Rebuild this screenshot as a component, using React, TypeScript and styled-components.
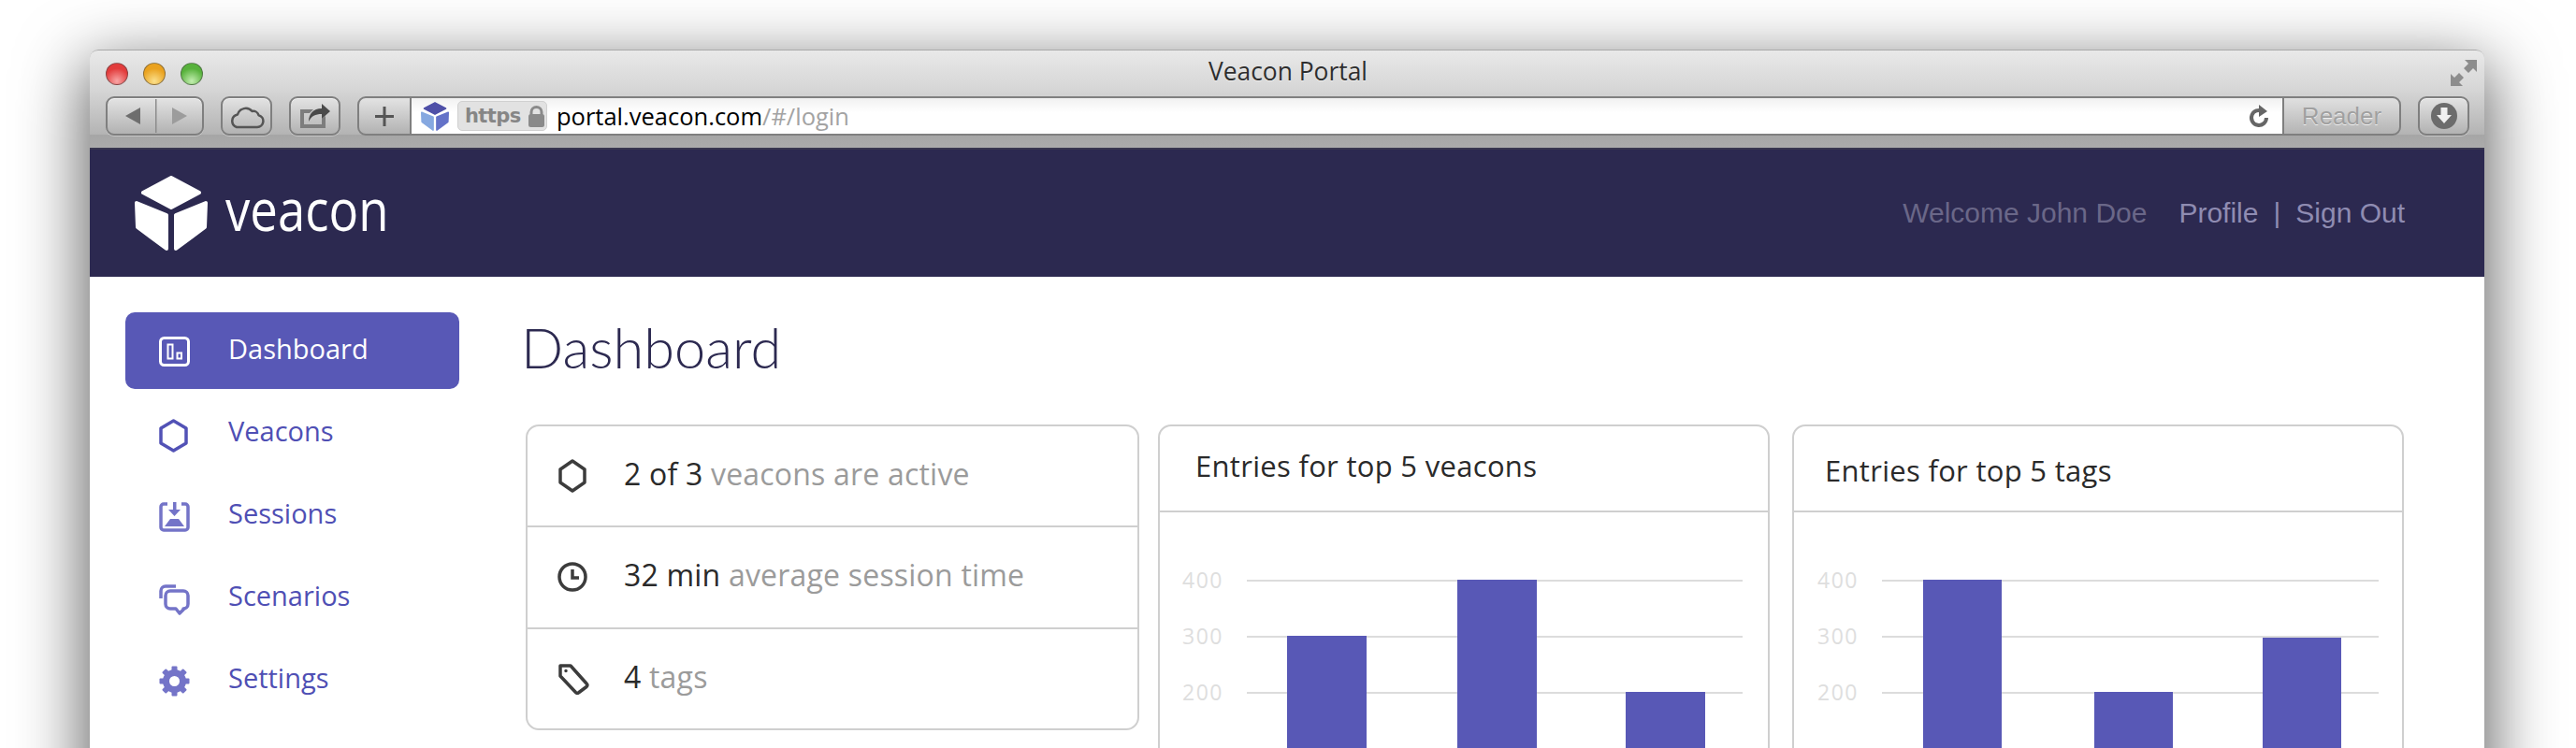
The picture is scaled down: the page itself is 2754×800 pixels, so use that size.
import React from 'react';
import styled, { createGlobalStyle } from 'styled-components';

const GlobalStyle = createGlobalStyle`
  html, body {
    margin: 0;
    padding: 0;
    background: #fff;
    overflow: hidden;
  }
`;

const UI_FONT = `"Open Sans", "Liberation Sans", sans-serif`;

const navItems = [
  { label: 'Dashboard', icon: 'dashboard', shift: 1, active: true },
  { label: 'Veacons', icon: 'hexagon', shift: 3 },
  { label: 'Sessions', icon: 'sessions', shift: 2 },
  { label: 'Scenarios', icon: 'scenarios', shift: 3 },
  { label: 'Settings', icon: 'settings', shift: 1 },
];

const stats = [
  { icon: 'hex', strong: '2 of 3', rest: 'veacons are active' },
  { icon: 'clock', strong: '32 min', rest: 'average session time' },
  { icon: 'tag', strong: '4', rest: 'tags' },
];

const veaconChart = {
  labelX: 24,
  lineFrom: 93,
  lineTo: 623,
  barWidth: 85,
  bars: [{ x: 136, top: 132 }, { x: 318, top: 72 }, { x: 498, top: 192 }],
};

const tagChart = {
  labelX: 25,
  lineFrom: 94,
  lineTo: 625,
  barWidth: 84,
  bars: [{ x: 138, top: 72 }, { x: 321, top: 192 }, { x: 501, top: 134 }],
};

const NavIcon: React.FC<{ name: string }> = ({ name }) => {
  if (name === 'dashboard') {
    return (
      <svg width="33" height="33" viewBox="0 0 33 33" fill="none" stroke="#fff">
        <rect x="1.500" y="1.500" width="30" height="29" rx="4" strokeWidth="3" />
        <rect x="9.500" y="8.500" width="5" height="15" strokeWidth="2" />
        <rect x="19.500" y="17.500" width="4.500" height="6" strokeWidth="2" />
      </svg>
    );
  }
  if (name === 'hexagon') {
    return (
      <svg width="33" height="36" viewBox="0 0 33 36" fill="none" stroke="#5252b6" strokeWidth="3.500" strokeLinejoin="round">
        <path d="M15.500 2 L29 10 V26 L15.500 34 L2 26 V10 Z" />
      </svg>
    );
  }
  if (name === 'sessions') {
    return (
      <svg width="33" height="33" viewBox="0 0 33 33" fill="none">
        <path d="M9 2 H5 a3 3 0 0 0 -3 3 V27 a3 3 0 0 0 3 3 H28 a3 3 0 0 0 3 -3 V5 a3 3 0 0 0 -3 -3 H24" stroke="#7474c8" strokeWidth="3.500" />
        <path d="M15 0 h3.500 v8 h4.500 L16.500 15 L10 8 h5 Z M12 18 H21 L27 26 H6 Z" fill="#7474c8" />
      </svg>
    );
  }
  if (name === 'scenarios') {
    return (
      <svg width="33" height="34" viewBox="0 0 33 34" fill="none" stroke="#7474c8" strokeWidth="3.500" strokeLinejoin="round">
        <path d="M18 2 H7 a5 5 0 0 0 -5 5 V15" />
        <path d="M12 7 H26 a5 5 0 0 1 5 5 V21 a5 5 0 0 1 -5 5 H27 L22 31 L18 26 H12 a5 5 0 0 1 -5 -5 V12 a5 5 0 0 1 5 -5 Z" />
      </svg>
    );
  }
  return (
    <svg width="33" height="33" viewBox="0 0 33 33">
      {[0, 45, 90, 135, 180, 225, 270, 315].map((deg) => (
        <rect key={deg} x="13.500" y="0.500" width="6" height="6" rx="1" fill="#7474c8" transform={`rotate(${deg} 16.500 16.500)`} />
      ))}
      <circle cx="16.500" cy="16.500" r="9" fill="none" stroke="#7474c8" strokeWidth="7" />
    </svg>
  );
};

const StatIcon: React.FC<{ name: string }> = ({ name }) => {
  if (name === 'hex') {
    return (
      <svg width="32" height="36" viewBox="0 0 32 36" fill="none" stroke="#3c3c3c" strokeWidth="3.500" strokeLinejoin="round">
        <path d="M16 2 L29 11 V25 L16 34 L3 25 V11 Z" />
      </svg>
    );
  }
  if (name === 'clock') {
    return (
      <svg width="32" height="34" viewBox="0 0 32 34" fill="none" stroke="#3c3c3c" strokeWidth="3.500">
        <circle cx="16" cy="17" r="14" />
        <path d="M16 9 V18 H23" />
      </svg>
    );
  }
  return (
    <svg width="34" height="34" viewBox="0 0 34 34" fill="none" stroke="#3c3c3c" strokeWidth="3.500" strokeLinejoin="round">
      <path d="M3 3 H14 L31 22 a2.500 2.500 0 0 1 0 3.500 L23 31.500 a2.500 2.500 0 0 1 -3.500 0 L3 14 Z" />
      <circle cx="9" cy="8.500" r="1" fill="#3c3c3c" strokeWidth="1.500" />
    </svg>
  );
};

const CubeFaces: React.FC<{ top: string; left: string; right: string }> = ({ top, left, right }) => (
  <>
    <path d="M39 2 L69 18 L39 34 L9 18 Z" fill={top} stroke={top} strokeWidth="4" strokeLinejoin="round" />
    <path d="M2 29 L34 42 V78 L3 55 Z" fill={left} stroke={left} strokeWidth="4" strokeLinejoin="round" />
    <path d="M76 29 L44 42 V78 L75 55 Z" fill={right} stroke={right} strokeWidth="4" strokeLinejoin="round" />
  </>
);

const BarChart: React.FC<{ chart: typeof veaconChart }> = ({ chart }) => (
  <ChartSvg width="650" height="260">
    {[
      { value: 400, y: 73 },
      { value: 300, y: 133 },
      { value: 200, y: 193 },
    ].map((tick) => (
      <g key={tick.value}>
        <text x={chart.labelX} y={tick.y + 8} fontSize="23" letterSpacing="1.500" fill="#dedede" fontFamily={UI_FONT}>
          {tick.value}
        </text>
        <rect x={chart.lineFrom} y={tick.y - 1} width={chart.lineTo - chart.lineFrom} height="2" fill="#dcdcdc" />
      </g>
    ))}
    {chart.bars.map((bar) => (
      <rect key={bar.x} x={bar.x} y={bar.top} width={chart.barWidth} height={260 - bar.top} fill="#5858b6" />
    ))}
  </ChartSvg>
);

export default function App() {
  return (
    <Page>
      <GlobalStyle />
      <BrowserWindow>
        <Chrome>
          <TitleRow>
            <Lights>
              <Light $color="#e23c3c" $glow="#f9a6a6" />
              <Light $color="#eaa21f" $glow="#fbe08c" />
              <Light $color="#58b23c" $glow="#c3eeb0" />
            </Lights>
            <WindowTitle>Veacon Portal</WindowTitle>
            <FullscreenIcon viewBox="0 0 30 30" width="30" height="30">
              <path d="M16 1 H29 V14 L25 10 L20 15 L15 10 L20 5 Z M1 16 L5 20 L10 15 L15 20 L10 25 L14 29 H1 Z" fill="#8d8d8d" />
            </FullscreenIcon>
          </TitleRow>
          <ToolRow>
            <ToolButton $width={105}>
              <svg width="70" height="36" viewBox="0 0 70 36">
                <path d="M3 18 L19 9 V27 Z" fill="#6e6e6e" />
                <rect x="35" y="0" width="1.500" height="36" fill="#8c8c8c" />
                <path d="M53 9 L69 18 L53 27 Z" fill="#9c9c9c" />
              </svg>
            </ToolButton>
            <ToolButton $width={55}>
              <svg width="38" height="27" viewBox="0 0 38 27" fill="none" stroke="#555" strokeWidth="2.500" strokeLinejoin="round">
                <path d="M9 25 H30 a6.500 6.500 0 0 0 1.500 -12.800 a6 6 0 0 0 -7 -4.200 a9 9 0 0 0 -15.500 3.500 a7 7 0 0 0 -1 13.500 Z" />
              </svg>
            </ToolButton>
            <ToolButton $width={55}>
              <svg width="34" height="28" viewBox="0 0 34 28">
                <path d="M1 7 H15 L11 11 H5 V23 H24 V17 L28 14 V27 H1 Z" fill="#7d7d7d" />
                <path d="M24 1 L33 9 L24 17 V12 C17 12 13 14 10 20 C10 12 15 6 24 6 Z" fill="#4a4a4a" />
              </svg>
            </ToolButton>
            <AddressBar>
              <PlusButton>
                <svg width="20" height="21" viewBox="0 0 20 21">
                  <path d="M8.500 0 h3 v9 H20 v3 H11.500 V21 h-3 V12 H0 v-3 H8.500 Z" fill="#555" />
                </svg>
              </PlusButton>
              <UrlField>
                <svg width="30" height="31" viewBox="0 0 78 80">
                  <CubeFaces top="#4f50a8" left="#86a8e0" right="#6472c8" />
                </svg>
                <SchemeBadge>
                  https
                  <svg width="17" height="23" viewBox="0 0 17 23">
                    <path d="M3 10 V7 a5.500 5.500 0 0 1 11 0 V10" fill="none" stroke="#8a8a8a" strokeWidth="3" />
                    <rect x="0" y="9" width="17" height="14" rx="2.500" fill="#8a8a8a" />
                  </svg>
                </SchemeBadge>
                <UrlText>
                  portal.veacon.com<UrlPath>/#/login</UrlPath>
                </UrlText>
                <ReloadIcon width="23" height="25" viewBox="0 0 23 25">
                  <path d="M16 7 A8 8 0 1 0 20 14" fill="none" stroke="#666" strokeWidth="4" />
                  <path d="M12 0 L21 7 L12 13 Z" fill="#666" />
                </ReloadIcon>
              </UrlField>
              <ReaderButton>Reader</ReaderButton>
            </AddressBar>
            <ToolButton $width={55}>
              <svg width="28" height="28" viewBox="0 0 28 28">
                <circle cx="14" cy="14" r="14" fill="#6c6c6c" />
                <path d="M10.500 5 h7 v8 H22 L14 22 L6 13 h4.500 Z" fill="#f0f0f0" />
              </svg>
            </ToolButton>
          </ToolRow>
        </Chrome>

        <TopBar>
          <Logo>
            <svg width="78" height="80" viewBox="0 0 78 80">
              <CubeFaces top="#fff" left="#fff" right="#fff" />
            </svg>
            <LogoText>veacon</LogoText>
          </Logo>
          <UserArea>
            <Welcome>Welcome John Doe</Welcome>
            <TopLink>Profile</TopLink>
            <TopLink>|</TopLink>
            <TopLink>Sign Out</TopLink>
          </UserArea>
        </TopBar>

        <Body>
          <Sidebar>
            {navItems.map((item) => (
              <NavRow key={item.label} $active={item.active}>
                <NavIconSlot $shift={item.shift}>
                  <NavIcon name={item.icon} />
                </NavIconSlot>
                <NavLabel>{item.label}</NavLabel>
              </NavRow>
            ))}
          </Sidebar>
          <Main>
            <PageTitle>Dashboard</PageTitle>
            <Cards>
              <StatsCard>
                {stats.map((stat) => (
                  <StatRow key={stat.icon}>
                    <StatIconSlot>
                      <StatIcon name={stat.icon} />
                    </StatIconSlot>
                    <StatText>
                      <StatStrong>{stat.strong}</StatStrong> {stat.rest}
                    </StatText>
                  </StatRow>
                ))}
              </StatsCard>
              <ChartCard>
                <ChartHeader $offset={-3} $indent={38}>Entries for top 5 veacons</ChartHeader>
                <BarChart chart={veaconChart} />
              </ChartCard>
              <ChartCard $alignEnd>
                <ChartHeader $offset={2} $indent={33}>Entries for top 5 tags</ChartHeader>
                <BarChart chart={tagChart} />
              </ChartCard>
            </Cards>
          </Main>
        </Body>
      </BrowserWindow>
    </Page>
  );
}

const Page = styled.div`
  height: 800px;
  overflow: hidden;
  padding: 53px 98px 0 96px;
  box-sizing: border-box;
  background: #fff;
`;

const BrowserWindow = styled.div`
  width: 2560px;
  height: 900px;
  background: #fff;
  border-radius: 9px 9px 0 0;
  box-shadow: 0 22px 70px 6px rgba(0, 0, 0, 0.62);
`;

const Chrome = styled.header`
  height: 107px;
  box-sizing: border-box;
  border-top: 1px solid #a9a9a9;
  border-bottom: 2px solid #38364f;
  border-radius: 9px 9px 0 0;
  background: linear-gradient(#e9e9e9 0%, #d6d6d6 40%, #b4b4b4 86%, #a6a6a6 87%, #ababab 100%);
`;

const TitleRow = styled.div`
  height: 49px;
  display: grid;
  grid-template-columns: 1fr auto 1fr;
  align-items: center;
  padding: 0 7px 0 17px;
`;

const Lights = styled.div`
  display: flex;
  gap: 16px;
`;

const Light = styled.span<{ $color: string; $glow: string }>`
  width: 24px;
  height: 24px;
  border-radius: 50%;
  box-sizing: border-box;
  border: 1px solid rgba(70, 70, 70, 0.55);
  background: radial-gradient(circle at 50% 85%, ${(p) => p.$glow} 0%, ${(p) => p.$color} 62%, ${(p) => p.$color} 100%);
`;

const WindowTitle = styled.div`
  margin-top: -6px;
  padding-right: 8px;
  font: 400 26.400px "Open Sans", "Liberation Sans", sans-serif;
  color: #2e2e2e;
  text-shadow: 0 1px 0 rgba(255, 255, 255, 0.6);
`;

const FullscreenIcon = styled.svg`
  justify-self: end;
  margin-top: -2px;
`;

const ToolRow = styled.div`
  display: flex;
  align-items: stretch;
  height: 42px;
  padding: 0 16px 0 17px;
  gap: 18px;
`;

const ToolButton = styled.div<{ $width: number }>`
  width: ${(p) => p.$width}px;
  flex: none;
  box-sizing: border-box;
  display: flex;
  align-items: center;
  justify-content: center;
  border: 2px solid #7f7f7f;
  border-radius: 9px;
  background: linear-gradient(#e3e3e3, #b2b2b2);
  box-shadow: inset 0 1px 0 rgba(255, 255, 255, 0.6), 0 1px 0 rgba(255, 255, 255, 0.35);
`;

const AddressBar = styled.div`
  flex: none;
  width: 2185px;
  display: flex;
`;

const PlusButton = styled.div`
  width: 58px;
  box-sizing: border-box;
  display: flex;
  align-items: center;
  justify-content: center;
  border: 2px solid #7f7f7f;
  border-radius: 9px 0 0 9px;
  background: linear-gradient(#e3e3e3, #b2b2b2);
`;

const UrlField = styled.div`
  flex: 1;
  display: flex;
  align-items: center;
  box-sizing: border-box;
  padding: 0 14px 0 10px;
  border-top: 2px solid #808080;
  border-bottom: 2px solid #808080;
  background: linear-gradient(#f1f1f1, #fff 40%);
`;

const SchemeBadge = styled.div`
  display: flex;
  align-items: center;
  gap: 8px;
  margin-left: 9px;
  height: 32px;
  width: 96px;
  padding-left: 7px;
  box-sizing: border-box;
  flex: none;
  border: 1px solid #d0d0d0;
  border-radius: 5px;
  background: #e2e2e2;
  font: 700 21px "DejaVu Sans", sans-serif;
  letter-spacing: -0.6px;
  color: #868686;
`;

const UrlText = styled.div`
  margin-left: 10px;
  flex: 1;
  font: 400 25.500px "Open Sans", "Liberation Sans", sans-serif;
  color: #000;
`;

const UrlPath = styled.span`
  color: #a3a3a3;
`;

const ReloadIcon = styled.svg`
  flex: none;
`;

const ReaderButton = styled.div`
  width: 127px;
  box-sizing: border-box;
  display: flex;
  align-items: center;
  justify-content: center;
  border: 2px solid #7f7f7f;
  border-radius: 0 9px 9px 0;
  background: linear-gradient(#e0e0e0, #b4b4b4);
  font: 400 26px "Liberation Sans", sans-serif;
  color: #a0a0a0;
  text-shadow: 0 1px 0 #eee;
`;

const TopBar = styled.div`
  height: 136px;
  box-sizing: border-box;
  display: flex;
  align-items: center;
  justify-content: space-between;
  padding: 0 85px 0 48px;
  background: #2c2950;
`;

const Logo = styled.div`
  display: flex;
  align-items: center;
  gap: 19px;
`;

const LogoText = styled.span`
  display: inline-block;
  font: 500 62px "Open Sans", sans-serif;
  color: #fff;
  transform: scaleX(0.85);
  transform-origin: left center;
  margin-top: -11px;
`;

const UserArea = styled.div`
  display: flex;
  align-items: center;
  gap: 16px;
  font: 400 30px "Liberation Sans", Arial, sans-serif;
`;

const Welcome = styled.span`
  color: #6a6788;
  margin-right: 18px;
`;

const TopLink = styled.span`
  color: #8f8cb2;
`;

const Body = styled.div`
  display: flex;
  align-items: flex-start;
`;

const Sidebar = styled.nav`
  flex: none;
  width: 357px;
  margin-left: 38px;
  padding-top: 38px;
  display: flex;
  flex-direction: column;
  gap: 6px;
`;

const NavRow = styled.a<{ $active?: boolean }>`
  height: 82px;
  display: flex;
  align-items: center;
  border-radius: 10px;
  padding-left: 36px;
  font: 500 29px "Open Sans", sans-serif;
  background: ${(p) => (p.$active ? '#5858b6' : 'transparent')};
  color: ${(p) => (p.$active ? '#fff' : '#4f4fb4')};
`;

const NavIconSlot = styled.span<{ $shift: number }>`
  width: 74px;
  flex: none;
  display: flex;
  align-items: center;
  transform: translateY(${(p) => p.$shift}px);
`;

const NavLabel = styled.span`
  padding-bottom: 6px;
`;

const Main = styled.main`
  flex: 1;
  padding-left: 70px;
`;

const PageTitle = styled.h1`
  margin: 32px 0 40px -4px;
  height: 86px;
  font: 300 59.500px/86px Lato, sans-serif;
  color: #2c2950;
`;

const Cards = styled.div`
  display: grid;
  grid-template-columns: 656px 654px 658px;
  gap: 20px;
  margin-left: 1px;
  align-items: start;
`;

const StatsCard = styled.section`
  height: 327px;
  box-sizing: border-box;
  border: 2px solid #cfcfcf;
  border-radius: 14px;
  display: flex;
  flex-direction: column;
`;

const StatRow = styled.div`
  flex: 1;
  display: flex;
  align-items: center;
  padding-left: 32px;
  font: 400 32px "Open Sans", sans-serif;
  letter-spacing: 0.2px;
  color: #9b9b9b;

  & + & {
    border-top: 2px solid #cfcfcf;
  }
`;

const StatIconSlot = styled.span`
  width: 71px;
  flex: none;
  display: flex;
`;

const StatText = styled.span`
  padding-bottom: 5px;
`;

const StatStrong = styled.span`
  color: #2a2a2a;
  font-weight: 500;
`;

const ChartCard = styled.section<{ $alignEnd?: boolean }>`
  width: 654px;
  height: 500px;
  box-sizing: border-box;
  border: 2px solid #cfcfcf;
  border-radius: 14px 14px 0 0;
  justify-self: ${(p) => (p.$alignEnd ? 'end' : 'start')};
`;

const ChartHeader = styled.h2<{ $offset: number; $indent: number }>`
  margin: 0;
  height: 92px;
  box-sizing: border-box;
  display: flex;
  align-items: center;
  padding: ${(p) => (p.$offset > 0 ? p.$offset * 2 : 0)}px 0 ${(p) => (p.$offset < 0 ? -p.$offset * 2 : 0)}px ${(p) => p.$indent}px;
  border-bottom: 2px solid #cfcfcf;
  font: 500 31px "Open Sans", sans-serif;
  letter-spacing: 0.3px;
  color: #2a2a2a;
`;

const ChartSvg = styled.svg`
  display: block;
`;
